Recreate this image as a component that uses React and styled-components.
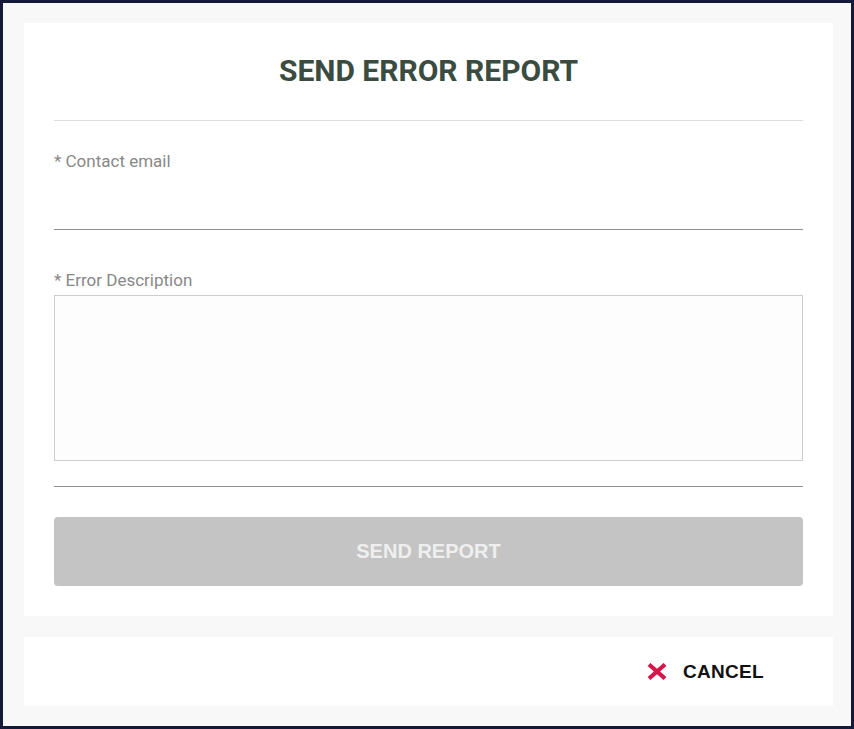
import React from "react";
import styled, { createGlobalStyle } from "styled-components";

const Global = createGlobalStyle`
  html, body { margin: 0; padding: 0; background: #141a38; }
  * { box-sizing: border-box; }
`;

const Frame = styled.div`
  width: 854px;
  height: 729px;
  padding: 3px 3px 3px 3px;
  background: #141a38;
`;

const Panel = styled.div`
  height: 100%;
  background: #f8f8f8;
  padding: 20px 18px 20px 21px;
  display: flex;
  flex-direction: column;
  gap: 21px;
`;

const Card = styled.div`
  background: #ffffff;
  padding: 31px 30px 30px 30px;
  display: flex;
  flex-direction: column;
`;

const Title = styled.h1`
  margin: 0;
  font-family: Roboto, "Liberation Sans", sans-serif;
  font-weight: 700;
  font-size: 30px;
  line-height: 34px;
  color: #3a4b3f;
  text-align: center;
`;

const Divider = styled.hr`
  margin: ${(p) => p.$top || 0}px 0 0 0;
  border: none;
  border-top: 1px solid ${(p) => p.$color || "#dddddd"};
  height: 0;
`;

const Label = styled.label`
  display: block;
  margin-top: ${(p) => p.$top}px;
  font-family: Roboto, "Liberation Sans", sans-serif;
  font-size: 17px;
  line-height: 20px;
  color: #888888;
`;

const EmailInput = styled.input`
  display: block;
  width: 100%;
  height: 59px;
  margin: 0;
  padding: 0;
  border: none;
  border-bottom: 1px solid #8f8f8f;
  background: transparent;
  outline: none;
  font-family: Roboto, sans-serif;
  font-size: 16px;
`;

const TextArea = styled.textarea`
  display: block;
  width: 100%;
  height: 166px;
  margin: 5px 0 0 0;
  padding: 8px;
  border: 1px solid #cdcdcd;
  background: #fdfdfd;
  resize: none;
  outline: none;
  font-family: Roboto, sans-serif;
  font-size: 16px;
`;

const SendButton = styled.button`
  margin-top: 30px;
  height: 69px;
  width: 100%;
  border: none;
  border-radius: 4px;
  background: #c4c4c4;
  color: #efefef;
  font-family: "Liberation Sans", Arial, sans-serif;
  font-weight: 700;
  font-size: 20px;
  cursor: default;
`;

const Footer = styled.div`
  background: #ffffff;
  height: 69px;
  display: flex;
  align-items: center;
  justify-content: flex-end;
  padding-right: 69px;
`;

const CancelButton = styled.button`
  display: flex;
  align-items: center;
  gap: 16px;
  border: none;
  background: transparent;
  padding: 0;
  font-family: "Liberation Sans", Arial, sans-serif;
  font-weight: 700;
  font-size: 19px;
  letter-spacing: 0.3px;
  color: #111111;
  cursor: pointer;
`;

const XIcon = () => (
  <svg width="20" height="17" viewBox="0 0 20 17">
    <path d="M2 1.5 L18 15.5 M18 1.5 L2 15.5" stroke="#d4184b" strokeWidth="4.2" />
  </svg>
);

export default function App() {
  return (
    <>
      <Global />
      <Frame>
        <Panel>
          <Card>
            <Title>SEND ERROR REPORT</Title>
            <Divider $top={32} />
            <Label $top={30}>* Contact email</Label>
            <EmailInput type="email" />
            <Label $top={40}>* Error Description</Label>
            <TextArea />
            <Divider $top={25} $color="#8f8f8f" />
            <SendButton disabled>SEND REPORT</SendButton>
          </Card>
          <Footer>
            <CancelButton>
              <XIcon />
              CANCEL
            </CancelButton>
          </Footer>
        </Panel>
      </Frame>
    </>
  );
}
